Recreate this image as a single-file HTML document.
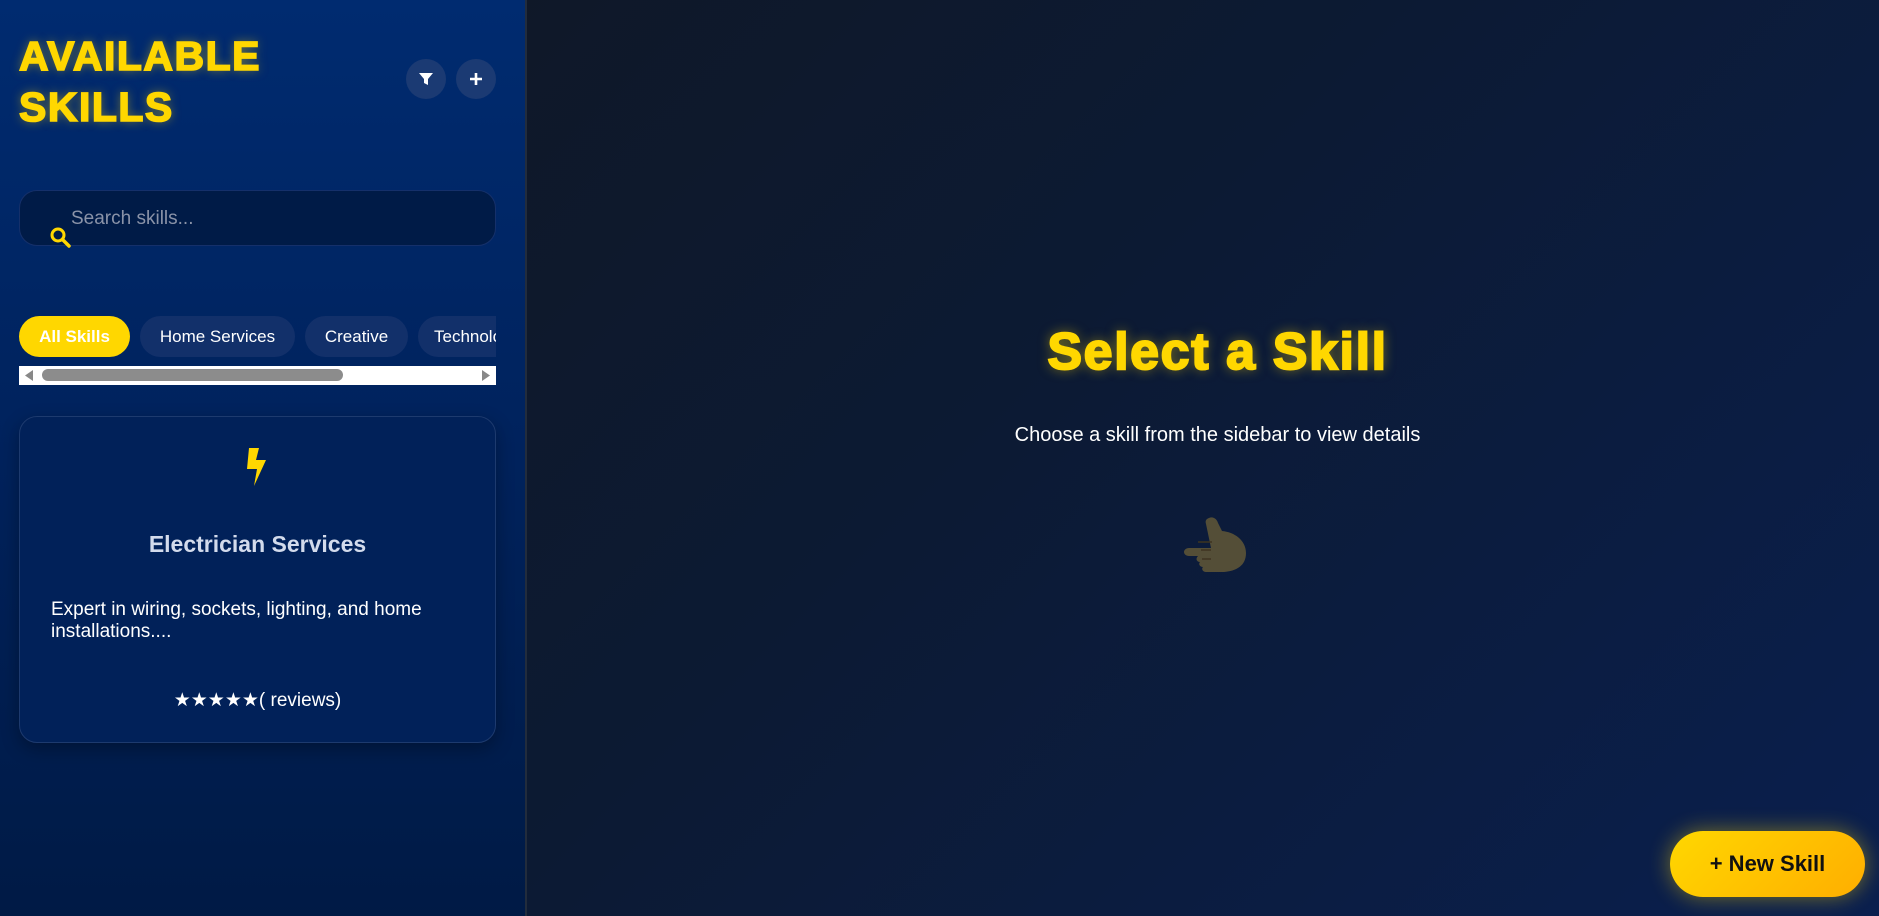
<!DOCTYPE html>
<html><head><meta charset="utf-8"><style>
*{box-sizing:border-box;margin:0;padding:0}
body{width:1879px;height:916px;overflow:hidden;font-family:"Liberation Sans",Arial,sans-serif;background:linear-gradient(135deg,#111722 0%,#0c1a33 50%,#0a1f4e 100%);position:relative}
.side{position:absolute;left:0;top:0;width:527px;height:916px;background:linear-gradient(180deg,#002b70 0%,#00225c 50%,#001a45 100%);border-right:2px solid #222c3c}
.title{position:absolute;left:19px;top:31px;color:#ffd700;font-weight:900;font-size:41px;line-height:51px;letter-spacing:1.5px;-webkit-text-stroke:1.6px #ffd700;text-shadow:0 0 10px rgba(255,215,0,.5)}
.cb{position:absolute;top:59px;width:40px;height:40px;border-radius:50%;background:#1b3a73;display:flex;align-items:center;justify-content:center}
.search{position:absolute;left:19px;top:190px;width:477px;height:56px;border-radius:18px;background:#001b47;border:1px solid #15306a}
.search span{position:absolute;left:51px;top:17px;font-size:19px;color:#8a93a8}
.chip{position:absolute;top:316px;height:41px;border-radius:21px;background:#12306a;color:#fff;font-size:17px;display:flex;align-items:center;justify-content:center}
.sb{position:absolute;left:19px;top:366px;width:477px;height:19px;background:#fff}
.card{position:absolute;left:19px;top:416px;width:477px;height:327px;border-radius:18px;border:1px solid #1d3a6e;background:#012159;box-shadow:0 6px 18px rgba(0,0,0,.3)}
.main h1{position:absolute;left:556px;width:1323px;top:322px;text-align:center;color:#ffd700;font-size:52px;font-weight:900;letter-spacing:1.6px;-webkit-text-stroke:2px #ffd700;text-shadow:0 0 12px rgba(255,215,0,.55)}
.sub{position:absolute;left:556px;width:1323px;top:424px;text-align:center;color:#fff;font-size:20px}
.btn{position:absolute;left:1670px;top:831px;width:195px;height:66px;border-radius:33px;background:linear-gradient(135deg,#ffd700,#ffae00);box-shadow:0 0 22px rgba(255,215,0,.45);display:flex;align-items:center;justify-content:center;font-weight:bold;font-size:22px;color:#111}
</style></head><body>
<div class="side">
<div class="title">AVAILABLE<br>SKILLS</div>
<div class="cb" style="left:406px"><svg width="16" height="16" viewBox="0 0 16 16"><path d="M1 2h14l-5 6v6l-4-2V8z" fill="#fff"/></svg></div>
<div class="cb" style="left:456px"><svg width="16" height="16" viewBox="0 0 16 16"><path d="M8 2v12M2 8h12" stroke="#fff" stroke-width="2.6"/></svg></div>
<div class="search"><span>Search skills...</span>
<svg style="position:absolute;left:29px;top:35px" width="24" height="24" viewBox="0 0 24 24"><circle cx="9" cy="9" r="6" fill="none" stroke="#ffd700" stroke-width="3"/><path d="M13.5 13.5L20 20" stroke="#ffd700" stroke-width="3.5" stroke-linecap="round"/></svg></div>
<div class="chip" style="left:19px;width:111px;background:#ffd700;font-weight:bold">All Skills</div>
<div class="chip" style="left:140px;width:155px">Home Services</div>
<div class="chip" style="left:305px;width:103px">Creative</div>
<div style="position:absolute;left:418px;top:316px;width:78px;height:41px;overflow:hidden"><div class="chip" style="left:0;top:0;width:118px">Technology</div></div>
<div class="sb"><svg style="position:absolute;left:6px;top:4px" width="8" height="11"><path d="M8 0V11L0 5.5z" fill="#888"/></svg>
<div style="position:absolute;left:23px;top:3px;width:301px;height:12px;border-radius:6px;background:#8c8c8c"></div>
<svg style="position:absolute;right:6px;top:4px" width="8" height="11"><path d="M0 0V11L8 5.5z" fill="#888"/></svg></div>
<div class="card">
<svg style="position:absolute;left:226px;top:30px" width="24" height="40" viewBox="0 0 24 40"><path d="M3 1h10l-3 12h10L8 39l3-17H1z" fill="#ffd700"/></svg>
<div style="position:absolute;left:0;width:100%;top:114px;text-align:center;font-weight:bold;font-size:23px;color:#d3dbec">Electrician Services</div>
<div style="position:absolute;left:31px;top:182px;width:420px;font-size:19px;line-height:22px;color:#fff">Expert in wiring, sockets, lighting, and home installations....</div>
<div style="position:absolute;left:0;width:100%;top:272px;text-align:center;font-size:19px;color:#fff">★★★★★( reviews)</div>
</div>
</div>
<div class="main">
<h1>Select a Skill</h1>
<div class="sub">Choose a skill from the sidebar to view details</div>
<svg style="position:absolute;left:1184px;top:515px" width="66" height="58" viewBox="0 0 66 58"><path d="M25 3c4-2 8 1 9 5l4 8c12 1 24 9 24 22s-10 18-22 19H22c-3 0-5-3-3-5-3 0-5-3-3-5-3 0-5-3-2-6H5c-3 0-5-2-5-4s2-4 5-4h22L22 9c-1-3 0-5 3-6z" fill="#544e37"/><path d="M14 27h14M17 35h10M18 44h9" stroke="#3e3420" stroke-width="1.5"/></svg>
</div>
<div class="btn">+ New Skill</div>
</body></html>
